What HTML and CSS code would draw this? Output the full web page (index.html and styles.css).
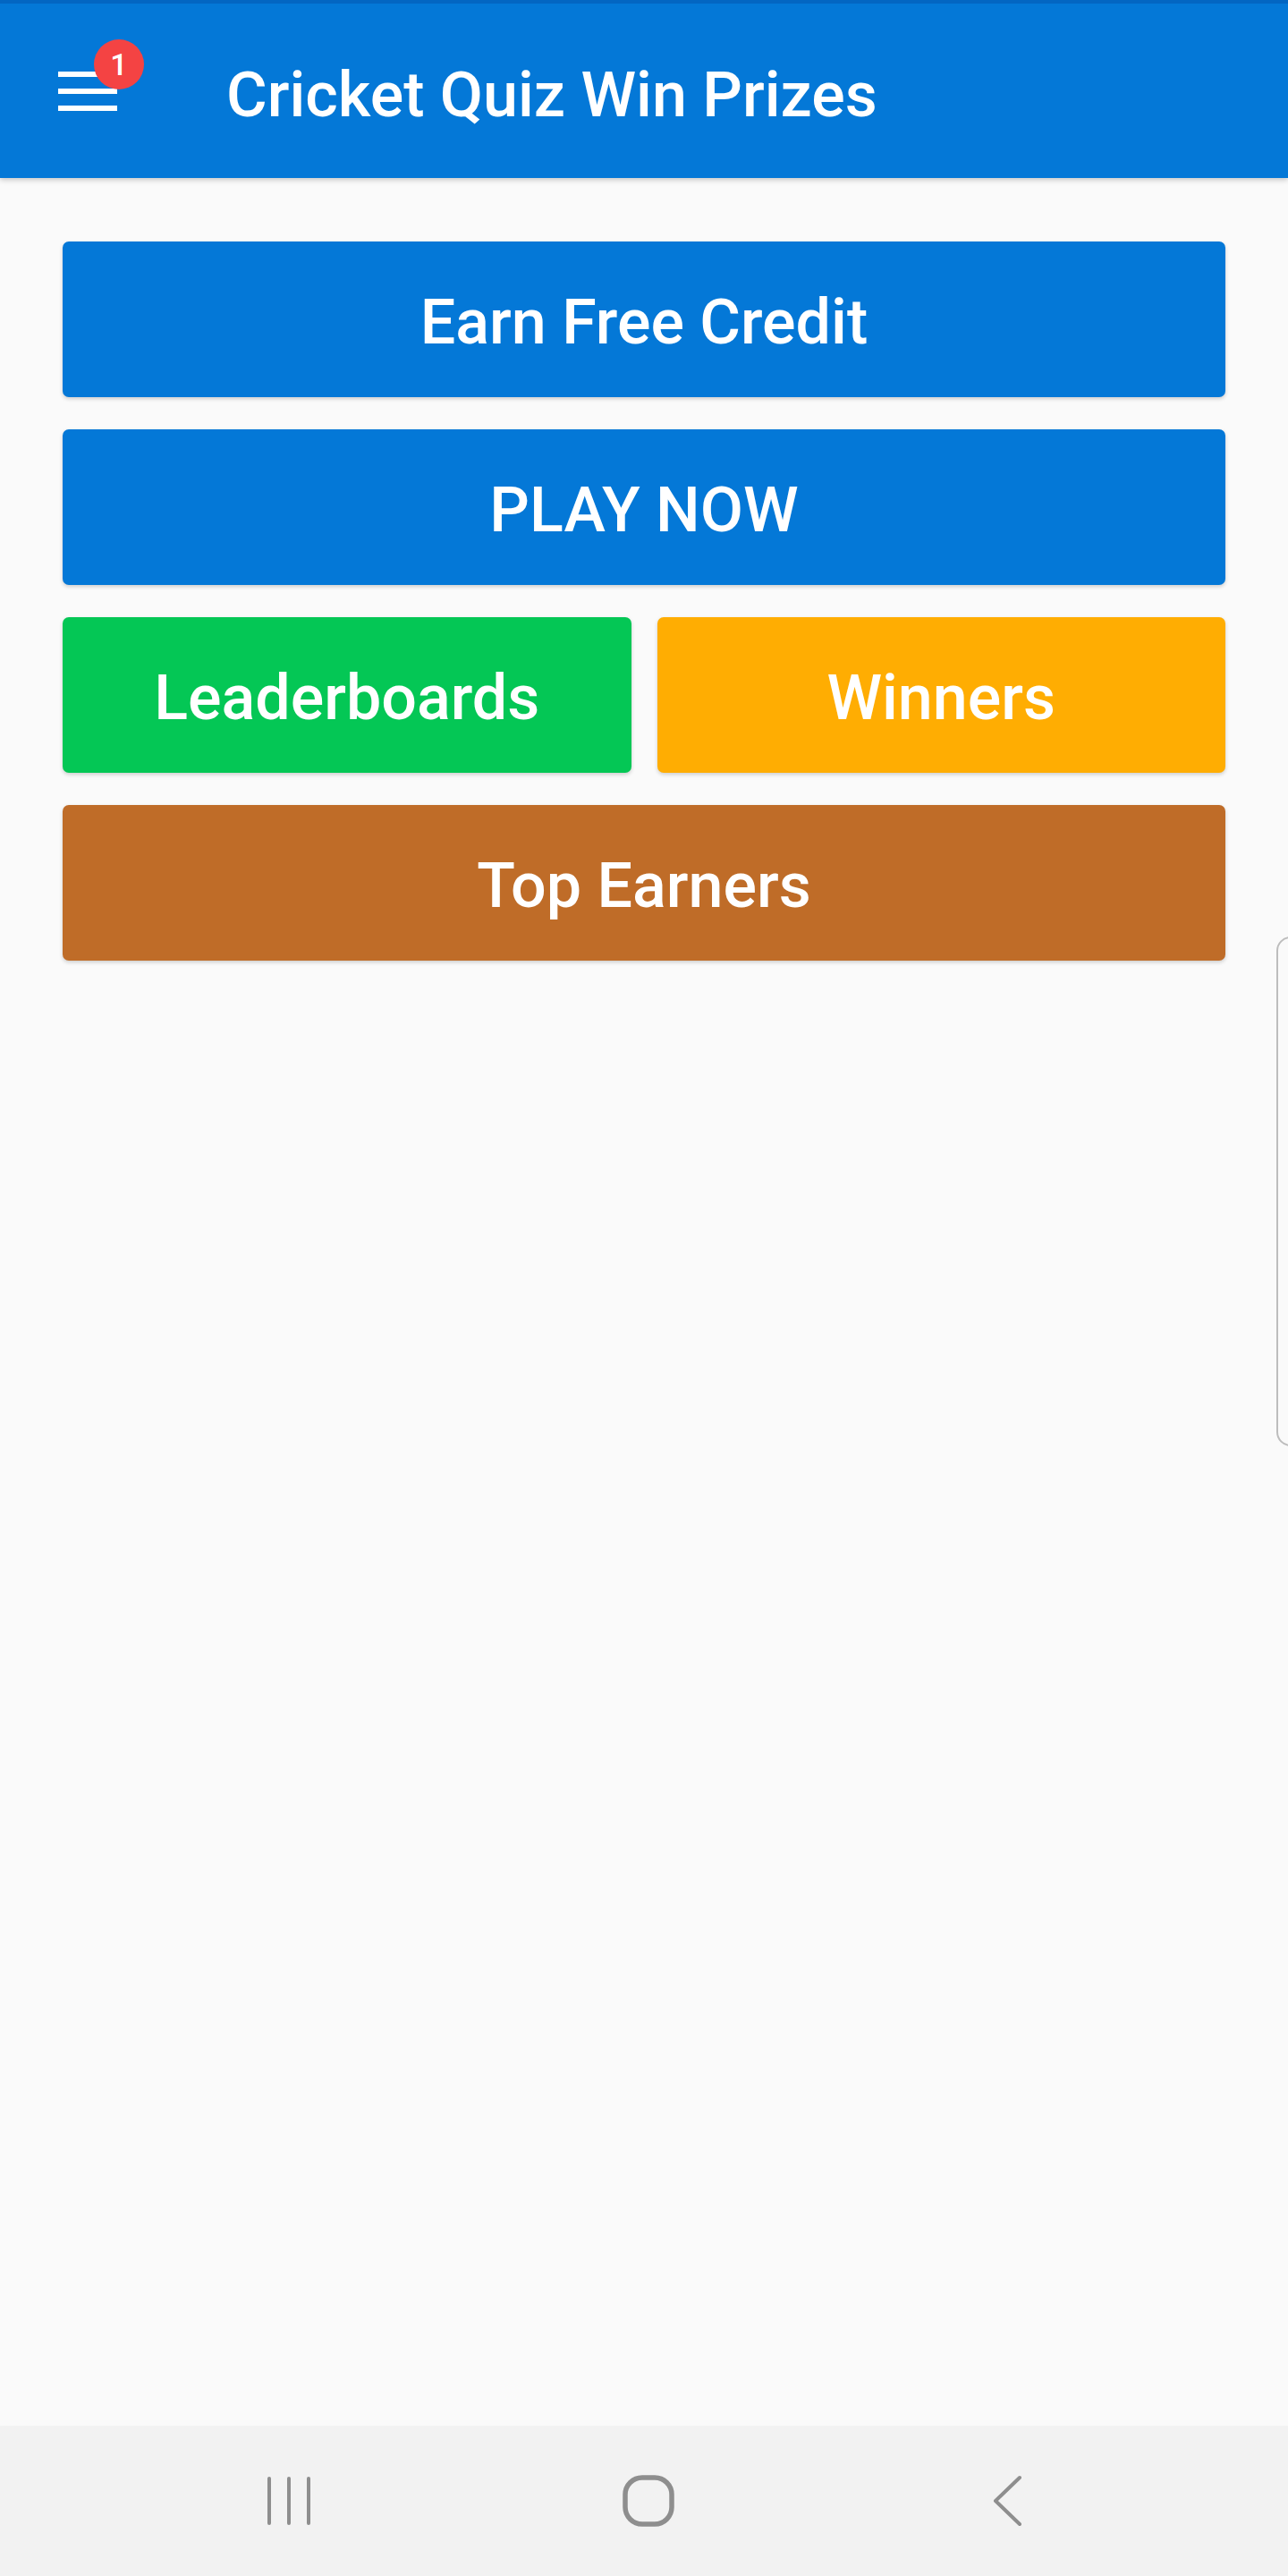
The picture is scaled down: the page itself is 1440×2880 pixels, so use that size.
FILE: index.html
```html
<!DOCTYPE html>
<html lang="en">
<head>
  <meta charset="UTF-8">
  <meta name="viewport" content="width=device-width, initial-scale=1.0">
  <title>Cricket Quiz Win Prizes</title>
  <link rel="stylesheet" href="styles.css">
</head>
<body>
  <div class="app">
    <header class="toolbar">
      <div class="menu">
        <span class="bar"></span>
        <span class="bar"></span>
        <span class="bar"></span>
        <span class="badge">1</span>
      </div>
      <h1 class="title">Cricket Quiz Win Prizes</h1>
    </header>

    <main class="content">
      <div class="grid">
        <button class="btn wide blue">Earn Free Credit</button>
        <button class="btn wide blue">PLAY NOW</button>
        <button class="btn green">Leaderboards</button>
        <button class="btn orange">Winners</button>
        <button class="btn wide brown">Top Earners</button>
      </div>
      <div class="edge-handle"></div>
    </main>

    <nav class="navbar">
      <div class="nav-item">
        <svg width="52" height="56" viewBox="0 0 52 56">
          <g stroke="#8e8e8e" stroke-width="4" stroke-linecap="round">
            <line x1="4" y1="3" x2="4" y2="53"/>
            <line x1="26" y1="3" x2="26" y2="53"/>
            <line x1="48" y1="3" x2="48" y2="53"/>
          </g>
        </svg>
      </div>
      <div class="nav-item">
        <svg width="58" height="58" viewBox="0 0 58 58">
          <rect x="3" y="3" width="52" height="52" rx="19" fill="none" stroke="#8e8e8e" stroke-width="5.5"/>
        </svg>
      </div>
      <div class="nav-item">
        <svg width="34" height="58" viewBox="0 0 34 58">
          <polyline points="30,3 3,29 30,55" fill="none" stroke="#8e8e8e" stroke-width="4" stroke-linecap="round" stroke-linejoin="round"/>
        </svg>
      </div>
    </nav>
  </div>
</body>
</html>
```

FILE: styles.css
```css
body {
  margin: 0;
  font-family: Roboto, "Liberation Sans", Arial, sans-serif;
  background: #fafafa;
}
.app {
  min-height: 100vh;
  display: flex;
  flex-direction: column;
}
.toolbar {
  height: 195px;
  border-top: 4px solid #0366c2;
  background: #0478d7;
  display: flex;
  align-items: center;
  padding-left: 65px;
  box-shadow: 0 2px 6px rgba(0,0,0,0.22);
  position: relative;
  z-index: 2;
}
.menu {
  position: relative;
  width: 66px;
  height: 44px;
  display: flex;
  flex-direction: column;
  justify-content: space-between;
}
.bar {
  display: block;
  height: 6px;
  background: #fff;
}
.badge {
  position: absolute;
  left: 40px;
  top: -36px;
  width: 56px;
  height: 56px;
  border-radius: 50%;
  background: #f44343;
  color: #fff;
  font-size: 34px;
  font-weight: 500;
  line-height: 56px;
  text-align: center;
}
.title {
  margin: 8px 0 0 122px;
  color: #fff;
  font-size: 70px;
  font-weight: 500;
  line-height: 82px;
}
.content {
  flex: 1;
  position: relative;
  padding: 71px 70px 0;
}
.grid {
  display: grid;
  grid-template-columns: 1fr 1fr;
  column-gap: 29px;
  row-gap: 36px;
}
.btn {
  height: 174px;
  border: 0;
  border-radius: 7px;
  color: #fff;
  font-family: inherit;
  font-size: 70px;
  font-weight: 500;
  box-shadow: 0 2px 4px rgba(0,0,0,0.18);
  padding: 6px 0 0;
}
.wide {
  grid-column: span 2;
}
.blue { background: #0478d7; }
.green { background: #04c755; }
.orange { background: #ffad02; }
.brown { background: #bf6c28; }
.edge-handle {
  position: absolute;
  top: 848px;
  left: 1427px;
  width: 40px;
  height: 566px;
  border: 2px solid #bdbdbd;
  border-radius: 16px;
}
.navbar {
  height: 168px;
  background: #f2f2f2;
  display: grid;
  grid-template-columns: repeat(3, 402px);
  justify-content: center;
  align-items: center;
  padding-left: 10px;
  overflow: hidden;
}
.nav-item {
  display: flex;
  justify-content: center;
  align-items: center;
}
```
